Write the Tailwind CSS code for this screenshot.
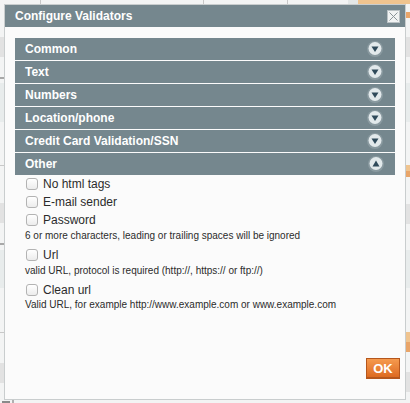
<!doctype html>
<html lang="en">
    <head>
        <meta charset="UTF-8" />
        <title>Configure Validators</title>
        <script src="https://cdn.jsdelivr.net/npm/@tailwindcss/browser@4"></script>
    </head>
    <body class="bg-[#f3f4f4]">
        <div class="relative w-[410px] h-[403px] overflow-hidden font-['Liberation_Sans',Arial,sans-serif]">
            <!-- page behind the dialog -->
            <div class="absolute left-[40px] top-0 w-px h-[4px] bg-[#c8c8c8]"></div>
            <div class="absolute left-[203px] top-0 w-px h-[4px] bg-[#c8c8c8]"></div>
            <div class="absolute left-[287px] top-0 w-px h-[4px] bg-[#c8c8c8]"></div>
            <div class="absolute left-[348px] top-0 w-[10px] h-[4px] bg-[#e4e7e7]"></div>
            <div class="absolute left-[358px] top-0 w-[52px] h-[4px] bg-[#f0c48f]"></div>
            <div class="absolute left-[406px] top-[12px] w-[4px] h-[6px] bg-[#e9a569]"></div>
            <div class="absolute left-[406px] top-[37px] w-[4px] h-[20px] bg-[#e2e2e2]"></div>
            <div class="absolute left-[406px] top-[83px] w-[4px] h-[39px] bg-[#e8ecec]"></div>
            <div class="absolute left-[406px] top-[165px] w-[4px] h-[6px] bg-[#f0c48f]"></div>
            <div class="absolute left-[406px] top-[171px] w-[4px] h-[6px] bg-[#e9a569]"></div>
            <div class="absolute left-[406px] top-[204px] w-[4px] h-[20px] bg-[#e2e2e2]"></div>
            <div class="absolute left-[406px] top-[250px] w-[4px] h-[38px] bg-[#e8ecec]"></div>
            <div class="absolute left-[406px] top-[332px] w-[4px] h-[10px] bg-[#f0c48f]"></div>
            <div class="absolute left-[406px] top-[342px] w-[4px] h-[10px] bg-[#e9a569]"></div>
            <div class="absolute left-[406px] top-[372px] w-[4px] h-[20px] bg-[#e2e2e2]"></div>
            <div class="absolute left-0 top-[37px] w-[4px] h-[20px] bg-[#e2e2e2]"></div>
            <div class="absolute left-0 top-[77px] w-[4px] h-[2px] bg-[#a8a8a8]"></div>
            <div class="absolute left-0 top-[83px] w-[4px] h-[39px] bg-[#e8ecec]"></div>
            <div class="absolute left-0 top-[165px] w-[4px] h-px bg-[#c8c8c8]"></div>
            <div class="absolute left-0 top-[203px] w-[4px] h-[20px] bg-[#e2e2e2]"></div>
            <div class="absolute left-0 top-[243px] w-[4px] h-[2px] bg-[#a8a8a8]"></div>
            <div class="absolute left-0 top-[250px] w-[4px] h-[38px] bg-[#e8ecec]"></div>
            <div class="absolute left-0 top-[332px] w-[4px] h-px bg-[#c8c8c8]"></div>
            <div class="absolute left-0 top-[363px] w-[4px] h-[20px] bg-[#e2e2e2]"></div>
            <div class="absolute left-[2px] top-[401px] w-[8px] h-[2px] bg-[#8a8a8a]"></div>
            <div class="absolute left-[12px] top-[400px] w-[2px] h-[3px] bg-[#b0b0b0]"></div>

            <!-- dialog -->
            <div class="absolute left-[4px] top-[4px] w-[402px] h-[396px] flex flex-col bg-[#fbfbfb] border border-[#c9cdce]">
                <div class="flex items-center justify-between h-[22px] bg-[#75878e] pl-[10px] pr-[5px]">
                    <span class="text-[12px] leading-none font-bold text-white">Configure Validators</span>
                    <span class="flex items-center justify-center w-[13px] h-[13px] bg-[#f1f3f3] border border-[#b9c1c4]">
                        <svg width="9" height="9" viewBox="0 0 9 9"><path d="M.5.5l8 8M8.5.5l-8 8" stroke="#8b9599" fill="none" /></svg>
                    </span>
                </div>

                <div class="flex flex-col flex-1 px-[10px] pt-[11px] pb-[20px]">
                    <div class="flex flex-col gap-px">
                        <div class="flex items-center justify-between h-[22px] bg-[#75878e] pl-[10px] pr-[12px]">
                            <span class="text-[12px] font-bold text-white">Common</span>
                            <svg width="16" height="16" viewBox="0 0 16 16"><circle cx="8" cy="8" r="8" fill="#8a9aa0" /><circle cx="8" cy="7.5" r="6.5" fill="#e2e9eb" /><path d="M4.5 5.5h7L8 11z" fill="#2f4a5a" /></svg>
                        </div>
                        <div class="flex items-center justify-between h-[22px] bg-[#75878e] pl-[10px] pr-[12px]">
                            <span class="text-[12px] font-bold text-white">Text</span>
                            <svg width="16" height="16" viewBox="0 0 16 16"><circle cx="8" cy="8" r="8" fill="#8a9aa0" /><circle cx="8" cy="7.5" r="6.5" fill="#e2e9eb" /><path d="M4.5 5.5h7L8 11z" fill="#2f4a5a" /></svg>
                        </div>
                        <div class="flex items-center justify-between h-[22px] bg-[#75878e] pl-[10px] pr-[12px]">
                            <span class="text-[12px] font-bold text-white">Numbers</span>
                            <svg width="16" height="16" viewBox="0 0 16 16"><circle cx="8" cy="8" r="8" fill="#8a9aa0" /><circle cx="8" cy="7.5" r="6.5" fill="#e2e9eb" /><path d="M4.5 5.5h7L8 11z" fill="#2f4a5a" /></svg>
                        </div>
                        <div class="flex items-center justify-between h-[22px] bg-[#75878e] pl-[10px] pr-[12px]">
                            <span class="text-[12px] font-bold text-white">Location/phone</span>
                            <svg width="16" height="16" viewBox="0 0 16 16"><circle cx="8" cy="8" r="8" fill="#8a9aa0" /><circle cx="8" cy="7.5" r="6.5" fill="#e2e9eb" /><path d="M4.5 5.5h7L8 11z" fill="#2f4a5a" /></svg>
                        </div>
                        <div class="flex items-center justify-between h-[22px] bg-[#75878e] pl-[10px] pr-[12px]">
                            <span class="text-[12px] font-bold text-white">Credit Card Validation/SSN</span>
                            <svg width="16" height="16" viewBox="0 0 16 16"><circle cx="8" cy="8" r="8" fill="#8a9aa0" /><circle cx="8" cy="7.5" r="6.5" fill="#e2e9eb" /><path d="M4.5 5.5h7L8 11z" fill="#2f4a5a" /></svg>
                        </div>
                        <div class="flex items-center justify-between h-[22px] bg-[#75878e] pl-[10px] pr-[11px]">
                            <span class="text-[12px] font-bold text-white">Other</span>
                            <svg width="16" height="16" viewBox="0 0 16 16"><circle cx="8" cy="8" r="8" fill="#8a9aa0" /><circle cx="8" cy="7.5" r="6.5" fill="#e2e9eb" /><path d="M4.5 10.5h7L8 4.5z" fill="#2f4a5a" /></svg>
                        </div>
                    </div>

                    <div class="flex flex-col pl-[10px] text-[#2b2b2b]">
                        <label class="flex items-center gap-[5px] h-[18px] pl-[1px] text-[12px]"><span class="w-[12px] h-[12px] rounded-[3px] border border-[#b3b3b3] bg-gradient-to-b from-white to-[#ececec]"></span>No html tags</label>
                        <label class="flex items-center gap-[5px] h-[18px] pl-[1px] text-[12px]"><span class="w-[12px] h-[12px] rounded-[3px] border border-[#b3b3b3] bg-gradient-to-b from-white to-[#ececec]"></span>E-mail sender</label>
                        <label class="flex items-center gap-[5px] h-[18px] pl-[1px] text-[12px]"><span class="w-[12px] h-[12px] rounded-[3px] border border-[#b3b3b3] bg-gradient-to-b from-white to-[#ececec]"></span>Password</label>
                        <p class="mt-px text-[10px] leading-[12px]">6 or more characters, leading or trailing spaces will be ignored</p>
                        <label class="flex items-center gap-[5px] h-[18px] pl-[1px] mt-[4px] text-[12px]"><span class="w-[12px] h-[12px] rounded-[3px] border border-[#b3b3b3] bg-gradient-to-b from-white to-[#ececec]"></span>Url</label>
                        <p class="mt-px text-[10px] leading-[12px]">valid URL, protocol is required (http://, https:// or ftp://)</p>
                        <label class="flex items-center gap-[5px] h-[18px] pl-[1px] mt-[4px] text-[12px]"><span class="w-[12px] h-[12px] rounded-[3px] border border-[#b3b3b3] bg-gradient-to-b from-white to-[#ececec]"></span>Clean url</label>
                        <p class="text-[10px] leading-[12px]">Valid URL, for example http://www.example.com or www.example.com</p>
                    </div>

                    <div class="flex justify-end mt-auto -mr-[5px]">
                        <button class="w-[34px] h-[21px] bg-gradient-to-b from-[#f59a4e] to-[#dd6a1f] border border-[#b5561c] border-b-2 text-[13px] leading-none font-bold text-white">OK</button>
                    </div>
                </div>
            </div>
        </div>
    </body>
</html>
